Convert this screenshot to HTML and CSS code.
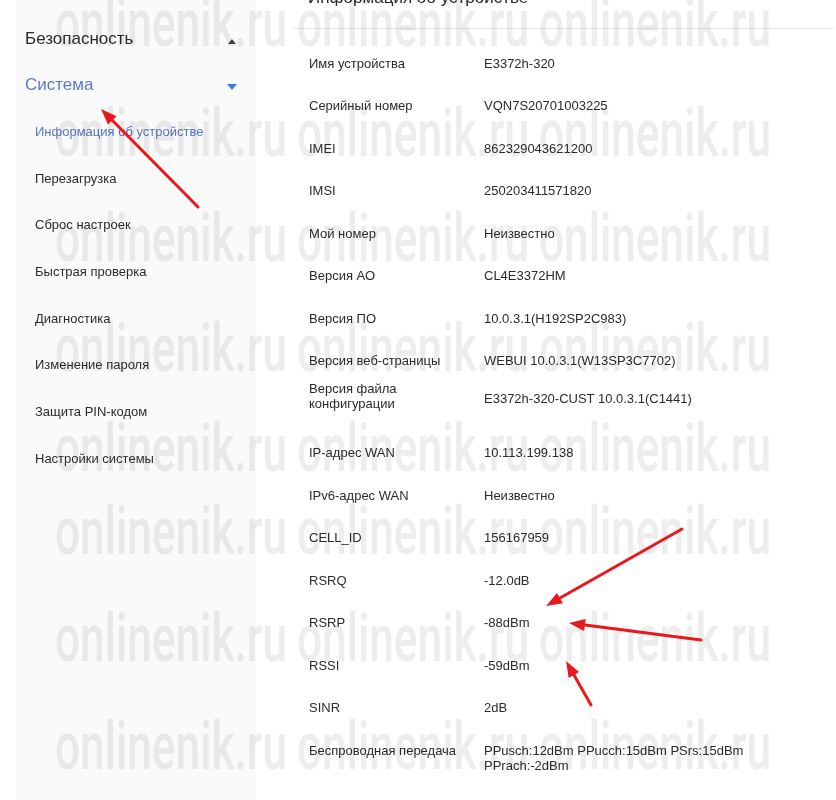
FILE: index.html
```html
<!DOCTYPE html>
<html lang="ru">
<head>
    <meta charset="UTF-8">
    <meta name="viewport" content="width=device-width, initial-scale=1.0">
    <title>Информация об устройстве</title>
    <link rel="stylesheet" href="styles.css">
</head>
<body>
    <div class="page">
        <aside class="sidebar">
            <div class="nav-group">
                <span>Безопасность</span>
                <i class="caret caret-up"></i>
            </div>
            <div class="nav-group open">
                <span>Система</span>
                <i class="caret caret-down"></i>
            </div>
            <ul class="nav-list">
                <li class="nav-item active">Информация об устройстве</li>
                <li class="nav-item">Перезагрузка</li>
                <li class="nav-item">Сброс настроек</li>
                <li class="nav-item">Быстрая проверка</li>
                <li class="nav-item">Диагностика</li>
                <li class="nav-item">Изменение пароля</li>
                <li class="nav-item">Защита PIN-кодом</li>
                <li class="nav-item">Настройки системы</li>
            </ul>
        </aside>
        <main class="content">
            <h1 class="content-title">Информация об устройстве</h1>
            <div class="info-table">
                <div class="info-row"><div class="info-label">Имя устройства</div><div class="info-value">E3372h-320</div></div>
                <div class="info-row"><div class="info-label">Серийный номер</div><div class="info-value">VQN7S20701003225</div></div>
                <div class="info-row"><div class="info-label">IMEI</div><div class="info-value">862329043621200</div></div>
                <div class="info-row"><div class="info-label">IMSI</div><div class="info-value">250203411571820</div></div>
                <div class="info-row"><div class="info-label">Мой номер</div><div class="info-value">Неизвестно</div></div>
                <div class="info-row"><div class="info-label">Версия АО</div><div class="info-value">CL4E3372HM</div></div>
                <div class="info-row"><div class="info-label">Версия ПО</div><div class="info-value">10.0.3.1(H192SP2C983)</div></div>
                <div class="info-row"><div class="info-label">Версия веб-страницы</div><div class="info-value">WEBUI 10.0.3.1(W13SP3C7702)</div></div>
                <div class="info-row tall"><div class="info-label">Версия файла<br>конфигурации</div><div class="info-value">E3372h-320-CUST 10.0.3.1(C1441)</div></div>
                <div class="info-row"><div class="info-label">IP-адрес WAN</div><div class="info-value">10.113.199.138</div></div>
                <div class="info-row"><div class="info-label">IPv6-адрес WAN</div><div class="info-value">Неизвестно</div></div>
                <div class="info-row"><div class="info-label">CELL_ID</div><div class="info-value">156167959</div></div>
                <div class="info-row"><div class="info-label">RSRQ</div><div class="info-value">-12.0dB</div></div>
                <div class="info-row"><div class="info-label">RSRP</div><div class="info-value">-88dBm</div></div>
                <div class="info-row"><div class="info-label">RSSI</div><div class="info-value">-59dBm</div></div>
                <div class="info-row"><div class="info-label">SINR</div><div class="info-value">2dB</div></div>
                <div class="info-row wrap"><div class="info-label">Беспроводная передача</div><div class="info-value">PPusch:12dBm PPucch:15dBm PSrs:15dBm PPrach:-2dBm</div></div>
            </div>
        </main>
    </div>

    <div class="watermark">
        <div class="wm-row"><span class="wm-copy"><span>onlinenik.ru</span></span><span class="wm-copy"><span>onlinenik.ru</span></span><span class="wm-copy"><span>onlinenik.ru</span></span></div>
        <div class="wm-row"><span class="wm-copy"><span>onlinenik.ru</span></span><span class="wm-copy"><span>onlinenik.ru</span></span><span class="wm-copy"><span>onlinenik.ru</span></span></div>
        <div class="wm-row"><span class="wm-copy"><span>onlinenik.ru</span></span><span class="wm-copy"><span>onlinenik.ru</span></span><span class="wm-copy"><span>onlinenik.ru</span></span></div>
        <div class="wm-row"><span class="wm-copy"><span>onlinenik.ru</span></span><span class="wm-copy"><span>onlinenik.ru</span></span><span class="wm-copy"><span>onlinenik.ru</span></span></div>
        <div class="wm-row"><span class="wm-copy"><span>onlinenik.ru</span></span><span class="wm-copy"><span>onlinenik.ru</span></span><span class="wm-copy"><span>onlinenik.ru</span></span></div>
        <div class="wm-row"><span class="wm-copy"><span>onlinenik.ru</span></span><span class="wm-copy"><span>onlinenik.ru</span></span><span class="wm-copy"><span>onlinenik.ru</span></span></div>
        <div class="wm-row"><span class="wm-copy"><span>onlinenik.ru</span></span><span class="wm-copy"><span>onlinenik.ru</span></span><span class="wm-copy"><span>onlinenik.ru</span></span></div>
        <div class="wm-row"><span class="wm-copy"><span>onlinenik.ru</span></span><span class="wm-copy"><span>onlinenik.ru</span></span><span class="wm-copy"><span>onlinenik.ru</span></span></div>
    </div>

    <svg class="marks" width="836" height="800" viewBox="0 0 836 800">
        <g stroke="#e8181c" stroke-width="3" stroke-linecap="round" fill="none">
            <line x1="198" y1="207" x2="112" y2="120"/>
            <line x1="682" y1="529" x2="560" y2="598"/>
            <line x1="701" y1="640" x2="585" y2="625"/>
            <line x1="591" y1="705" x2="574" y2="675"/>
        </g>
        <g fill="#e8181c">
            <polygon points="101,109 116.5,116.2 108,124.6"/>
            <polygon points="546,606 557,592.9 562.9,603.3"/>
            <polygon points="569,623 585.7,619.1 584.1,631"/>
            <polygon points="566,661 579.1,671.9 568.7,677.9"/>
        </g>
    </svg>
</body>
</html>
```

FILE: styles.css
```css
body {
    margin: 0;
    background: #fff;
    color: #2b2b2b;
    font-family: "Liberation Sans", Arial, sans-serif;
    height: 800px;
    overflow: hidden;
    position: relative;
}
.page {
    display: flex;
    height: 800px;
}

/* left menu */
.sidebar {
    flex: 0 0 240px;
    margin-left: 16px;
    padding-top: 16px;
    background: #fafafa;
    box-sizing: border-box;
}
.nav-group {
    height: 46px;
    display: flex;
    align-items: center;
    justify-content: space-between;
    padding: 0 19px 0 9px;
    font-size: 17px;
    color: #2b2b2b;
}
.nav-group.open {
    color: #5a7bc4;
}
.caret {
    width: 0;
    height: 0;
    margin-top: 4px;
}
.caret-up {
    border-left: 4px solid transparent;
    border-right: 4px solid transparent;
    border-bottom: 5px solid #444;
    margin-right: 1px;
}
.caret-down {
    border-left: 5px solid transparent;
    border-right: 5px solid transparent;
    border-top: 6px solid #3f7ad6;
}
.nav-list {
    list-style: none;
    margin: 0;
    padding: 0;
}
.nav-item {
    height: 46.7px;
    display: flex;
    align-items: center;
    padding-left: 19px;
    font-size: 13px;
    color: #2b2b2b;
}
.nav-item.active {
    color: #5577c3;
}

/* device info */
.content {
    flex: 1;
    margin: 0 3px 0 37px;
}
.content-title {
    margin: -12px 0 0;
    height: 41px;
    box-sizing: border-box;
    padding-left: 15px;
    font-size: 17px;
    font-weight: normal;
    line-height: 20px;
    border-bottom: 1px solid #e4e4e4;
}
.info-table {
    margin-top: 13px;
}
.info-row {
    display: flex;
    align-items: center;
    height: 42.5px;
    padding-left: 16px;
    font-size: 13px;
    line-height: 15px;
    color: #2b2b2b;
}
.info-label {
    flex: 0 0 175px;
}
.info-value {
    width: 300px;
}
.info-row.tall {
    height: 49.5px;
    align-items: flex-start;
}
.info-row.tall .info-label {
    margin-top: -1.5px;
}
.info-row.tall .info-value {
    padding-top: 8.5px;
}
.info-row.wrap {
    height: auto;
    align-items: flex-start;
    padding-top: 13.5px;
    line-height: 15.5px;
}

/* site watermark */
.watermark {
    position: absolute;
    top: 0;
    left: 0;
    width: 836px;
    height: 800px;
    overflow: hidden;
    pointer-events: none;
    mix-blend-mode: multiply;
}
.wm-row {
    position: absolute;
    left: 55px;
    white-space: nowrap;
    font-family: Roboto, sans-serif;
    font-weight: 500;
    font-size: 66px;
    line-height: 66px;
    color: #ededed;
}
.wm-row:nth-child(1) { top: -9px; }
.wm-row:nth-child(2) { top: 101px; }
.wm-row:nth-child(3) { top: 206px; }
.wm-row:nth-child(4) { top: 316px; }
.wm-row:nth-child(5) { top: 416px; }
.wm-row:nth-child(6) { top: 499px; }
.wm-row:nth-child(7) { top: 606px; }
.wm-row:nth-child(8) { top: 714px; }
.wm-copy {
    display: inline-block;
    width: 242px;
}
.wm-copy span {
    display: inline-block;
    transform: scaleX(0.67);
    transform-origin: 0 50%;
}

.marks {
    position: absolute;
    top: 0;
    left: 0;
    pointer-events: none;
}
```
